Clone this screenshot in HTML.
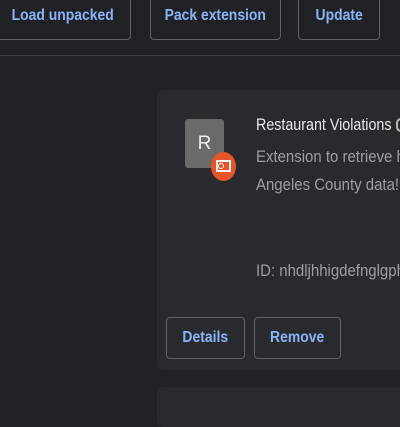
<!DOCTYPE html>
<html><head><style>
*{margin:0;padding:0;box-sizing:border-box}
body{width:400px;height:400px;overflow:hidden;background:#202124;font-family:"Liberation Sans",sans-serif;position:relative}
.btn{position:absolute;border:1px solid #5f6368;border-radius:4px;color:#8ab4f8;font-size:16px;font-weight:bold;display:flex;align-items:center;justify-content:center;background:#202124}
.btn span{display:inline-block;transform:scaleX(0.87)}
.line{position:absolute;left:0;top:55px;width:400px;height:1px;background:#3c4043}
.card{position:absolute;background:#292a2d;border-radius:6px}
.t{position:absolute;white-space:nowrap;transform:scaleX(0.88);transform-origin:left}
</style></head><body>
<div class="btn" style="left:-5px;top:-8px;width:136px;height:48px"><span>Load unpacked</span></div>
<div class="btn" style="left:150px;top:-8px;width:131px;height:48px"><span>Pack extension</span></div>
<div class="btn" style="left:298px;top:-8px;width:82px;height:48px"><span>Update</span></div>
<div class="line"></div>
<div class="card" style="left:157px;top:90px;width:260px;height:280px"></div>
<div class="card" style="left:157px;top:387px;width:260px;height:40px"></div>
<div style="position:absolute;left:185px;top:119px;width:39px;height:49px;background:#6a6a6a;border-radius:3px;color:#eee;font-size:19px;display:flex;align-items:center;justify-content:center">R</div>
<div style="position:absolute;left:211px;top:152px;width:25px;height:29px;border-radius:50%;background:#e8542a"></div>
<div style="position:absolute;left:216px;top:160px;width:15px;height:12px;border:2px solid #fff;border-radius:1px"></div>
<div style="position:absolute;left:218px;top:163px;width:6px;height:6px;border:1.5px solid #fff;border-radius:50%"></div>
<div class="t" style="left:256px;top:115px;font-size:17px;color:#e8eaed;transform:scaleX(0.84)">Restaurant Violations</div>
<div style="position:absolute;left:396px;top:118px;width:10px;height:14px;border:2px solid #bbb;border-radius:5px"></div>
<div class="t" style="left:256px;top:147px;font-size:17px;color:#9aa0a6">Extension to retrieve he</div>
<div class="t" style="left:256px;top:175px;font-size:17px;color:#9aa0a6">Angeles County data!</div>
<div class="t" style="left:256px;top:261px;font-size:17px;color:#9aa0a6">ID: nhdljhhigdefnglgphb</div>
<div class="btn" style="left:166px;top:317px;width:79px;height:42px;background:#292a2d"><span>Details</span></div>
<div class="btn" style="left:254px;top:317px;width:87px;height:42px;background:#292a2d"><span>Remove</span></div>
</body></html>
